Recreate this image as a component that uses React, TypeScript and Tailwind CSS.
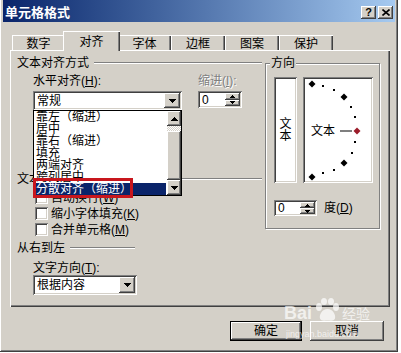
import React from "react"

const raised =
  "shadow-[inset_-1px_-1px_#404040,inset_1px_1px_#ffffff,inset_-2px_-2px_#808080,inset_2px_2px_#d4d0c8]"
const sunken =
  "shadow-[inset_1px_1px_#808080,inset_-1px_-1px_#ffffff,inset_2px_2px_#404040,inset_-2px_-2px_#d4d0c8]"

const tabs = [
  { label: "数字", w: "w-[53px]" },
  { label: "对齐", w: "w-[57px]", active: true },
  { label: "字体", w: "w-[53px]" },
  { label: "边框", w: "w-[54px]" },
  { label: "图案", w: "w-[54px]" },
  { label: "保护", w: "w-[54px]" },
]

const items = ["靠左（缩进）", "居中", "靠右（缩进）", "填充", "两端对齐", "跨列居中"]

function DownArrow() {
  return (
    <svg width="7" height="4" viewBox="0 0 7 4">
      <path d="M0 0h7v1H0zM1 1h5v1H1zM2 2h3v1H2zM3 3h1v1H3z" fill="#000" />
    </svg>
  )
}

function UpArrow() {
  return (
    <svg width="7" height="4" viewBox="0 0 7 4">
      <path d="M3 0h1v1H3zM2 1h3v1H2zM1 2h5v1H1zM0 3h7v1H0z" fill="#000" />
    </svg>
  )
}

function SmallArrow({ up }: { up?: boolean }) {
  return (
    <svg width="5" height="3" viewBox="0 0 5 3">
      {up ? (
        <path d="M2 0h1v1H2zM1 1h3v1H1zM0 2h5v1H0z" fill="#000" />
      ) : (
        <path d="M0 0h5v1H0zM1 1h3v1H1zM2 2h1v1H2z" fill="#000" />
      )}
    </svg>
  )
}

function Combo({ className, text }: { className: string; text: string }) {
  return (
    <div className={`${className} bg-white ${sunken} flex p-[2px]`}>
      <span className="flex-1 self-center pl-[2px] leading-[12px]">{text}</span>
      <div className={`w-[16px] bg-[#d4d0c8] ${raised} flex items-center justify-center`}>
        <DownArrow />
      </div>
    </div>
  )
}

function Spin({ className }: { className: string }) {
  return (
    <div className={`${className} bg-white ${sunken} flex p-[2px]`}>
      <span className="flex-1 self-center pl-[2px] leading-[12px]">0</span>
      <div className="w-[15px] flex flex-col">
        <div className={`flex-1 bg-[#d4d0c8] ${raised} flex items-center justify-center`}>
          <SmallArrow up />
        </div>
        <div className={`flex-1 bg-[#d4d0c8] ${raised} flex items-center justify-center`}>
          <SmallArrow />
        </div>
      </div>
    </div>
  )
}

function Header({ label, className }: { label: string; className: string }) {
  return (
    <div className={`flex items-center h-[12px] ml-[7px] ${className}`}>
      <span className="leading-[12px]">{label}</span>
      <div className="flex-1 ml-[5px] h-[2px] border-t border-t-[#808080] border-b border-b-white" />
    </div>
  )
}

function Check({ label, k, className }: { label: string; k: string; className: string }) {
  return (
    <div className={`flex items-center h-[13px] ml-[25px] ${className}`}>
      <div className={`w-[13px] h-[13px] bg-white ${sunken}`} />
      <span className="ml-[3px] leading-[12px]">
        {label}(<u>{k}</u>)
      </span>
    </div>
  )
}

// dots of the orientation dial, relative to the white box
const bigDots = [
  [9, 7],
  [41, 20],
  [41, 86],
  [9, 100],
]
const smallDots = [
  [20, 9],
  [31, 13],
  [48, 30],
  [52, 40],
  [52, 65],
  [49, 76],
  [31, 93],
  [20, 96],
]

function Dial() {
  return (
    <div className={`relative ml-[6px] w-[70px] h-[106px] bg-white ${sunken}`}>
      <svg className="absolute inset-0" width="70" height="106" viewBox="0 0 70 106">
        {bigDots.map(([x, y]) => (
          <path key={`${x}-${y}`} d={`M${x - 3.5} ${y}L${x} ${y - 3.5}L${x + 3.5} ${y}L${x} ${y + 3.5}Z`} fill="#000" />
        ))}
        {smallDots.map(([x, y]) => (
          <rect key={`${x}-${y}`} x={x - 1} y={y - 1} width="2" height="2" fill="#000" />
        ))}
        <path d="M54 50.5L57.5 54L54 57.5L50.5 54Z" fill="#9b1c2a" />
        <rect x="37" y="53.5" width="12" height="1" fill="#000" />
      </svg>
      <span className="absolute left-[8px] top-[48px] leading-[12px]">文本</span>
    </div>
  )
}

export default function App() {
  return (
    <div className="w-[401px] h-[353px] bg-white overflow-hidden text-[12px] text-black font-['Liberation_Sans','Noto_Sans_CJK_SC',sans-serif]">
      <div className="relative w-[398px] h-[352px] bg-[#d4d0c8] px-[3px] flex flex-col shadow-[inset_-1px_-1px_#404040,inset_1px_0_#ffffff,inset_-2px_-2px_#808080]">
        {/* title bar */}
        <div className="h-[22px] flex items-center pl-[2px] pr-[2px] pt-[3px] bg-gradient-to-r from-[#0a246a] to-[#a6caf0]">
          <span className="flex-1 text-white font-bold text-[13px] leading-[13px]">单元格格式</span>
          <div className={`w-[15px] h-[13px] bg-[#d4d0c8] ${raised} flex items-center justify-center text-[11px] font-bold leading-[11px]`}>
            ?
          </div>
          <div className={`ml-[2px] w-[15px] h-[13px] bg-[#d4d0c8] ${raised} flex items-center justify-center`}>
            <svg width="8" height="7" viewBox="0 0 8 7">
              <path d="M0.5 0.5L7.5 6.5M7.5 0.5L0.5 6.5" stroke="#000" strokeWidth="1.6" />
            </svg>
          </div>
        </div>

        {/* tabs */}
        <div className="mt-[9px] h-[20px] flex items-end pl-[9px]">
          {tabs.map((t) =>
            t.active ? (
              <div
                key={t.label}
                className={`${t.w} relative z-10 -mx-[2px] h-[20px] pt-[5px] text-center leading-[12px] bg-[#d4d0c8] shadow-[inset_1px_1px_#ffffff,inset_-1px_0_#404040,inset_-2px_0_#808080]`}
              >
                {t.label}
              </div>
            ) : (
              <div
                key={t.label}
                className={`${t.w} h-[16px] pt-[3px] text-center leading-[12px] shadow-[inset_1px_1px_#ffffff,inset_-1px_0_#404040,inset_-2px_0_#808080]`}
              >
                {t.label}
              </div>
            )
          )}
        </div>

        {/* tab panel */}
        <div className="relative -mt-[1px] ml-[7px] w-[380px] h-[257px] flex shadow-[inset_1px_1px_#ffffff,inset_-1px_-1px_#404040,inset_-2px_-2px_#808080]">
          <div className="w-[255px] flex flex-col">
            <Header label="文本对齐方式" className="mt-[7px] mr-[3px]" />
            <div className="flex mt-[6px] ml-[23px]">
              <div className="flex flex-col">
                <span className="leading-[12px]">
                  水平对齐(<u>H</u>):
                </span>
                <Combo className="mt-[4px] w-[149px] h-[19px]" text="常规" />
                {/* vertical alignment controls sit under the open list */}
                <div className="h-[43px]" />
              </div>
              <div className="flex flex-col ml-[16px]">
                <span className="leading-[12px] text-[#808080] [text-shadow:1px_1px_#ffffff]">
                  缩进(<u>I</u>):
                </span>
                <Spin className="mt-[4px] w-[44px] h-[17px]" />
              </div>
            </div>
            <Header label="文本控制" className="mt-[20px] mr-[3px]" />
            <Check label="自动换行" k="W" className="mt-[6px]" />
            <Check label="缩小字体填充" k="K" className="mt-[3px]" />
            <Check label="合并单元格" k="M" className="mt-[3px]" />
            <Header label="从右到左" className="mt-[6px] w-[118px]" />
            <span className="mt-[8px] ml-[23px] leading-[12px]">
              文字方向(<u>T</u>):
            </span>
            <Combo className="mt-[1px] ml-[23px] w-[104px] h-[20px]" text="根据内容" />
          </div>

          <div className="relative mt-[13px] w-[115px] h-[166px] border border-[#808080] shadow-[inset_1px_1px_#ffffff,1px_1px_#ffffff]">
            <span className="absolute left-[4px] -top-[7px] px-[1px] bg-[#d4d0c8] leading-[12px]">方向</span>
            <div className="flex flex-col pl-[8px] pt-[13px]">
              <div className="flex">
                <div className={`w-[23px] h-[106px] bg-white ${sunken} flex flex-col items-center justify-center leading-[12px]`}>
                  <span>文</span>
                  <span>本</span>
                </div>
                <Dial />
              </div>
              <div className="flex items-center mt-[17px]">
                <Spin className="w-[43px] h-[16px]" />
                <span className="ml-[7px] leading-[12px]">
                  度(<u>D</u>)
                </span>
              </div>
            </div>
          </div>

          {/* open drop-down list */}
          <div className="absolute left-[23px] top-[60px] w-[149px] h-[86px] bg-white border border-black flex">
            <div className="flex-1 flex flex-col overflow-hidden">
              {items.map((it) => (
                <div key={it} className="h-[12px] pl-[2px] leading-[12px] whitespace-nowrap">
                  {it}
                </div>
              ))}
              <div className="h-[12px] pl-[2px] leading-[12px] whitespace-nowrap bg-[#0a246a] text-white mr-[1px]">
                分散对齐（缩进）
              </div>
            </div>
            <div className="w-[14px] flex flex-col">
              <div className={`h-[15px] bg-[#d4d0c8] ${raised} flex items-center justify-center`}>
                <UpArrow />
              </div>
              <div className="h-[5px] bg-[repeating-conic-gradient(#ffffff_0%_25%,#d4d0c8_0%_50%)] bg-[length:2px_2px]" />
              <div className={`h-[49px] bg-[#d4d0c8] ${raised}`} />
              <div className={`h-[15px] bg-[#d4d0c8] ${raised} flex items-center justify-center`}>
                <DownArrow />
              </div>
            </div>
          </div>

          {/* red highlight */}
          <div className="absolute left-[23px] top-[128px] w-[100px] h-[20px] border-[3px] border-[#c8161d]" />
        </div>

        {/* buttons */}
        <div className="flex mt-[14px] ml-[227px] gap-[8px]">
          <div className={`w-[72px] h-[20px] border border-black bg-[#d4d0c8] ${raised} flex items-center justify-center leading-[12px]`}>
            确定
          </div>
          <div className={`w-[74px] h-[20px] bg-[#d4d0c8] ${raised} flex items-center justify-center leading-[12px]`}>
            取消
          </div>
        </div>

        {/* watermark */}
        <div className="absolute left-[284px] top-[298px] text-white/70 pointer-events-none">
          <div className="flex items-end">
            <span className="text-[18px] font-bold leading-[18px]">Bai</span>
            <svg width="28" height="24" viewBox="0 0 28 24" className="mx-[1px]">
              <g fill="#ffffff" fillOpacity="0.7">
                <ellipse cx="6" cy="9" rx="3" ry="4" />
                <ellipse cx="11" cy="3.5" rx="3" ry="3.5" />
                <ellipse cx="18" cy="3.5" rx="3" ry="3.5" />
                <ellipse cx="23" cy="9" rx="3" ry="4" />
                <path d="M14.5 11C9 11 6 17 7 20.5C8 23.5 12 22.5 14.5 22.5C17 22.5 21 23.5 22 20.5C23 17 20 11 14.5 11Z" />
              </g>
            </svg>
            <span className="text-[14px] leading-[14px] mb-[1px]">经验</span>
          </div>
          <div className="text-[9px] leading-[9px] mt-[8px] ml-[2px]">jingyan.baidu.com</div>
        </div>
      </div>
    </div>
  )
}
